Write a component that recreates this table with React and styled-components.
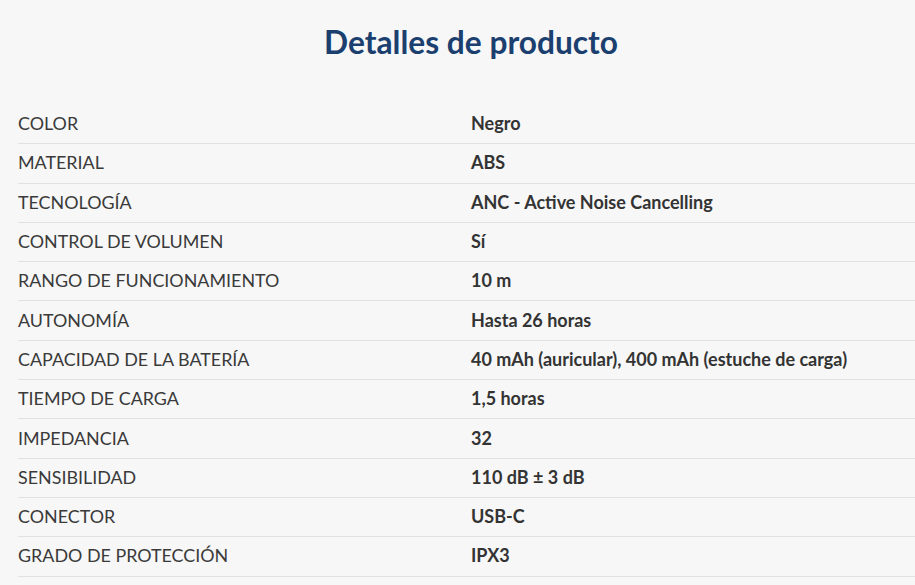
import React from 'react';
import styled, { createGlobalStyle } from 'styled-components';

const GlobalStyle = createGlobalStyle`
  html, body {
    margin: 0;
    padding: 0;
    background-color: #f7f7f7;
    overflow: hidden;
  }
  body {
    font-family: Lato, "Open Sans", sans-serif;
  }
`;

const Container = styled.div`
  width: 906px;
  margin-left: 18px;
  padding-top: 22px;
  box-sizing: border-box;
`;

const Title = styled.h2`
  margin: 0 0 43px;
  text-align: center;
  font-size: 31.7px;
  line-height: 40px;
  font-weight: 700;
  color: #1b3f6f;
`;

const Table = styled.div`
  display: flex;
  flex-direction: column;
`;

const Row = styled.div`
  display: grid;
  grid-template-columns: 1fr 1fr;
  height: 39.3px;
  padding-bottom: 2px;
  align-items: center;
  border-bottom: 1.5px solid #e1e1e1;
  box-sizing: border-box;
`;

const Label = styled.div`
  font-size: 17.9px;
  color: #3a3a3a;
  text-transform: uppercase;
`;

const Value = styled.div`
  font-size: 18px;
  font-weight: 700;
  color: #333333;
`;

const specs = [
  ['Color', 'Negro'],
  ['Material', 'ABS'],
  ['Tecnología', 'ANC - Active Noise Cancelling'],
  ['Control de volumen', 'Sí'],
  ['Rango de funcionamiento', '10 m'],
  ['Autonomía', 'Hasta 26 horas'],
  ['Capacidad de la batería', '40 mAh (auricular), 400 mAh (estuche de carga)'],
  ['Tiempo de carga', '1,5 horas'],
  ['Impedancia', '32'],
  ['Sensibilidad', '110 dB ± 3 dB'],
  ['Conector', 'USB-C'],
  ['Grado de protección', 'IPX3'],
];

function App() {
  return (
    <>
      <GlobalStyle />
      <Container>
        <Title>Detalles de producto</Title>
        <Table>
          {specs.map(([label, value]) => (
            <Row key={label}>
              <Label>{label}</Label>
              <Value>{value}</Value>
            </Row>
          ))}
        </Table>
      </Container>
    </>
  );
}

export default App;
